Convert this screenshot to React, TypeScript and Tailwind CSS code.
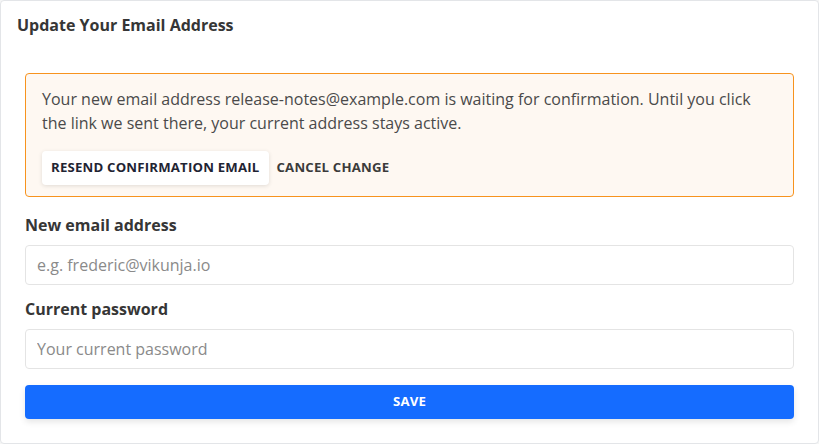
export default function App() {
  return (
    <div className="min-h-screen bg-[#f5f5f5] font-['Open_Sans',sans-serif]">
      <div className="w-[819px] h-[444px] bg-white border border-[#e3e5e8] rounded-[4px] overflow-hidden">
        <header className="h-[48px] flex items-center px-4">
          <h2 className="text-base font-bold text-[#363636]">
            Update Your Email Address
          </h2>
        </header>

        <div className="px-6 pt-6 pb-6">
          <div className="border border-[#f7931e] bg-[#fef8f2] rounded-[4px] px-4 pt-[13px] pb-[11px]">
            <p className="text-base leading-6 text-[#4a4a4a]">
              Your new email address release-notes@example.com is waiting for
              confirmation. Until you click the link we sent there, your current
              address stays active.
            </p>
            <div className="flex items-center gap-2 mt-4">
              <button className="h-[34px] px-[9px] bg-white rounded-[4px] shadow-[0_1px_4px_rgba(10,10,10,0.12)] text-[13.2px] font-bold tracking-[0.2px] text-[#1f2433]">
                RESEND CONFIRMATION EMAIL
              </button>
              <button className="h-[34px] text-[13.2px] font-bold tracking-[0.2px] text-[#3b3b3b]">
                CANCEL CHANGE
              </button>
            </div>
          </div>

          <label className="block mt-4 text-base font-bold leading-6 text-[#363636]">
            New email address
          </label>
          <input
            type="email"
            placeholder="e.g. frederic@vikunja.io"
            className="mt-2 block w-full h-[40px] px-[11px] border border-[#e4e4e4] rounded-[4px] text-base text-[#363636] placeholder:text-[#8a8a8a] outline-none"
          />

          <label className="block mt-3 text-base font-bold leading-6 text-[#363636]">
            Current password
          </label>
          <input
            type="password"
            placeholder="Your current password"
            className="mt-2 block w-full h-[40px] px-[11px] border border-[#e4e4e4] rounded-[4px] text-base text-[#363636] placeholder:text-[#8a8a8a] outline-none"
          />

          <button className="mt-4 w-full h-[34px] bg-[#156cff] rounded-[4px] shadow-[0_3px_6px_rgba(10,10,10,0.1)] text-[13.2px] font-bold text-white tracking-[0.2px]">
            SAVE
          </button>
        </div>
      </div>
    </div>
  );
}
